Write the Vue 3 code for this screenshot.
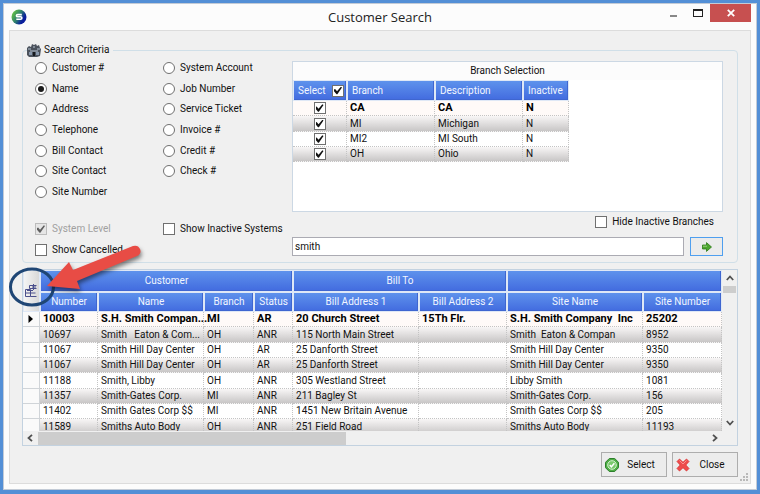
<template>
  <div class="window">
    <header class="titlebar">
      <svg class="app-icon" viewBox="0 0 16 16">
        <defs>
          <linearGradient id="ball" x1="0" y1="0" x2="1" y2="0.6">
            <stop offset="0.2" stop-color="#5cb848" />
            <stop offset="0.55" stop-color="#2c7d70" />
            <stop offset="0.85" stop-color="#0a1f9c" />
          </linearGradient>
        </defs>
        <circle cx="8" cy="8" r="7.5" fill="url(#ball)" />
        <path d="M10.8 5.6H6.8Q5.4 5.6 5.4 6.7T6.8 7.8H9.6Q10.9 7.8 10.9 9T9.6 10.2H5.3" fill="none" stroke="#fff" stroke-width="1.6" />
      </svg>
      <h1>Customer Search</h1>
      <div class="window-buttons">
        <button class="win-btn" aria-label="Minimize">
          <svg width="8" height="12" viewBox="0 0 8 12"><path d="M0 9h7" stroke="#888" stroke-width="2" /></svg>
        </button>
        <button class="win-btn" aria-label="Maximize">
          <svg width="10" height="8" viewBox="0 0 10 8"><path d="M0.5 1.5h9M0.5 0v8M9.5 0v8M0 7.5h10" fill="none" stroke="#222" stroke-width="1" /><path d="M0 1h10" stroke="#222" stroke-width="2" /></svg>
        </button>
        <button class="win-btn close" aria-label="Close window">
          <svg width="8" height="8" viewBox="0 0 8 8"><path d="M0.8 0.8l6.4 6.4M7.2 0.8L0.8 7.2" stroke="#fff" stroke-width="1.8" /></svg>
        </button>
      </div>
    </header>

    <main class="client">
      <fieldset class="criteria">
        <legend>
          <svg width="14" height="13" viewBox="0 0 14 13">
            <path d="M0 4l2-2 2 1 1-3 2 1 2-1 1 2 2-1 1 3 1 1-1 7-3 1H2L0 11z" fill="#4b525c" />
            <path d="M1 5h3M6 3h2M10 5h3M3 7h8" stroke="#b8c4d2" stroke-width="1" />
            <path d="M2 8h3v3H2zM9 8h3v3H9z" fill="#8797ab" />
            <path d="M6 8h2v4H6z" fill="#15181d" />
          </svg>
          Search Criteria
        </legend>
        <div class="options">
          <div class="radios">
            <label v-for="o in searchOptions" :key="o" class="choice">
              <input v-model="searchBy" type="radio" name="searchBy" :value="o" />
              {{ o }}
            </label>
          </div>
          <div class="checks">
            <label class="choice off"><input type="checkbox" checked disabled /> System Level</label>
            <label class="choice"><input v-model="showInactive" type="checkbox" /> Show Inactive Systems</label>
            <label class="choice"><input v-model="showCancelled" type="checkbox" /> Show Cancelled</label>
          </div>
        </div>

        <div class="right">
          <div class="branches">
            <h2>Branch Selection</h2>
            <table class="grid branch-grid">
              <colgroup>
                <col class="b-select" /><col class="b-name" /><col class="b-name" /><col class="b-inactive" />
              </colgroup>
              <thead>
                <tr>
                  <th>
                    <label class="select-all">Select <input type="checkbox" :checked="allSelected" @change="toggleAll" /></label>
                  </th>
                  <th>Branch</th>
                  <th>Description</th>
                  <th>Inactive</th>
                </tr>
              </thead>
              <tbody>
                <tr v-for="(b, i) in branches" :key="b.code" :class="{ current: i === 0 }">
                  <td class="center"><input v-model="b.selected" type="checkbox" :aria-label="b.code" /></td>
                  <td>{{ b.code }}</td>
                  <td>{{ b.description }}</td>
                  <td>{{ b.inactive }}</td>
                </tr>
              </tbody>
            </table>
          </div>
          <label class="choice hide-inactive"><input v-model="hideInactive" type="checkbox" /> Hide Inactive Branches</label>
          <div class="search-row">
            <input v-model="query" type="text" class="query" aria-label="Search text" />
            <button class="go" aria-label="Search">
              <svg width="10" height="10" viewBox="0 0 10 10">
                <path d="M0.5 3h4V0.6L9.5 5 4.5 9.4V7h-4z" fill="#4da62f" stroke="#2c7a17" stroke-width="0.8" />
                <path d="M1 4.2h4" stroke="#9fd684" stroke-width="0.9" />
              </svg>
            </button>
          </div>
        </div>
      </fieldset>

      <section class="results">
        <div class="viewport">
          <table class="grid result-grid">
            <colgroup>
              <col class="c-mark" /><col class="c-number" /><col class="c-name" /><col class="c-branch" /><col class="c-status" />
              <col class="c-addr1" /><col class="c-addr2" /><col class="c-site" /><col />
            </colgroup>
            <thead>
              <tr class="bands">
                <th rowspan="2" class="chooser">
                  <button aria-label="Choose columns">
                    <svg width="12" height="14" viewBox="0 0 12 14">
                      <path d="M4.5 4.5v-3h7M4.5 4.5h7M2 6.5h6M0.5 5.5h5v7h-5zM0.5 9h5M5.5 9h5M5.5 12.5h6M8.5 0v6M7 3h4" fill="none" stroke="#4a4f8c" stroke-width="1" />
                    </svg>
                  </button>
                </th>
                <th colspan="4">Customer</th>
                <th colspan="2">Bill To</th>
                <th colspan="2"></th>
              </tr>
              <tr>
                <th v-for="c in columns" :key="c">{{ c }}</th>
              </tr>
            </thead>
            <tbody>
              <tr v-for="(row, i) in customers" :key="i" :class="{ current: i === 0 }">
                <th class="mark">
                  <svg v-if="i === 0" width="5" height="8" viewBox="0 0 5 8"><path d="M0.5 0L5 4 0.5 8z" fill="#000" /></svg>
                </th>
                <td v-for="(cell, j) in row" :key="j">{{ cell }}</td>
              </tr>
            </tbody>
          </table>
        </div>
        <div class="vbar">
          <svg width="8" height="6" viewBox="0 0 8 6"><path d="M0.8 5L4 1.5 7.2 5" fill="none" stroke="#505050" stroke-width="1.8" /></svg>
          <div class="vthumb"></div>
          <svg class="down" width="8" height="6" viewBox="0 0 8 6"><path d="M0.8 1L4 4.5 7.2 1" fill="none" stroke="#505050" stroke-width="1.8" /></svg>
        </div>
        <div class="hbar">
          <svg width="6" height="8" viewBox="0 0 6 8"><path d="M5 0.8L1.5 4 5 7.2" fill="none" stroke="#505050" stroke-width="1.8" /></svg>
          <div class="htrack"><div class="hthumb"></div></div>
          <svg width="6" height="8" viewBox="0 0 6 8"><path d="M1 0.8L4.5 4 1 7.2" fill="none" stroke="#505050" stroke-width="1.8" /></svg>
        </div>

        <svg class="callout" width="150" height="76" viewBox="0 0 150 76">
          <ellipse cx="33" cy="47" rx="21.5" ry="18" fill="none" stroke="#1f4675" stroke-width="3" />
          <path class="arrow" d="M48 46L70 22l4 8L134 6q5-1.5 7 3t-3 7L78 41l3 8z" fill="#e84c45" />
        </svg>
      </section>

      <footer class="actions">
        <button class="action">
          <svg width="14" height="14" viewBox="0 0 14 14">
            <path d="M4.3 0.5h5.4l3.8 3.8v5.4l-3.8 3.8H4.3L0.5 9.7V4.3z" fill="#4fae45" stroke="#2d7f2c" />
            <circle cx="7" cy="7" r="4.3" fill="#79c96c" stroke="#d6f0d0" />
            <path d="M4.8 7l1.6 1.8L9.4 5.3" fill="none" stroke="#fff" stroke-width="1.5" />
          </svg>
          <span>Select</span>
        </button>
        <button class="action">
          <svg width="14" height="14" viewBox="0 0 14 14">
            <path d="M3.5 1L7 4.3 10.5 1 13 3.5 9.8 7 13 10.5 10.5 13 7 9.7 3.5 13 1 10.5 4.2 7 1 3.5z" fill="#ee4c4c" stroke="#d93030" stroke-width="0.8" />
            <path d="M3.5 2.5L7 6l3.5-3.5" fill="none" stroke="#f98f8f" />
          </svg>
          <span>Close</span>
        </button>
      </footer>
      <svg class="grip" width="8" height="8" viewBox="0 0 8 8">
        <path d="M6 0h2v2H6zM3 3h2v2H3zM6 3h2v2H6zM0 6h2v2H0zM3 6h2v2H3zM6 6h2v2H6z" fill="#b9b9b9" />
      </svg>
    </main>
  </div>
</template>

<script setup>
import { computed, ref } from 'vue';

const searchOptions = [
  'Customer #', 'Name', 'Address', 'Telephone', 'Bill Contact', 'Site Contact', 'Site Number',
  'System Account', 'Job Number', 'Service Ticket', 'Invoice #', 'Credit #', 'Check #'
];
const searchBy = ref('Name');
const showInactive = ref(false);
const showCancelled = ref(false);
const hideInactive = ref(false);
const query = ref('smith');

const branches = ref([
  { code: 'CA', description: 'CA', inactive: 'N', selected: true },
  { code: 'MI', description: 'Michigan', inactive: 'N', selected: true },
  { code: 'MI2', description: 'MI South', inactive: 'N', selected: true },
  { code: 'OH', description: 'Ohio', inactive: 'N', selected: true }
]);
const allSelected = computed(() => branches.value.every((b) => b.selected));

function toggleAll(e) {
  branches.value.forEach((b) => { b.selected = e.target.checked; });
}

const columns = ['Number', 'Name', 'Branch', 'Status', 'Bill Address 1', 'Bill Address 2', 'Site Name', 'Site Number'];
const customers = [
  ['10003', 'S.H. Smith Compan...', 'MI', 'AR', '20 Church Street', '15Th Flr.', 'S.H. Smith Company  Inc', '25202'],
  ['10697', 'Smith   Eaton & Com...', 'OH', 'ANR', '115 North Main Street', '', 'Smith  Eaton & Compan', '8952'],
  ['11067', 'Smith Hill Day Center', 'OH', 'AR', '25 Danforth Street', '', 'Smith Hill Day Center', '9350'],
  ['11067', 'Smith Hill Day Center', 'OH', 'AR', '25 Danforth Street', '', 'Smith Hill Day Center', '9350'],
  ['11188', 'Smith, Libby', 'OH', 'ANR', '305 Westland Street', '', 'Libby Smith', '1081'],
  ['11357', 'Smith-Gates Corp.', 'MI', 'ANR', '211 Bagley St', '', 'Smith-Gates Corp.', '156'],
  ['11402', 'Smith Gates Corp $$', 'MI', 'ANR', '1451 New Britain Avenue', '', 'Smith Gates Corp $$', '205'],
  ['11589', 'Smiths Auto Body', 'OH', 'ANR', '251 Field Road', '', 'Smiths Auto Body', '11193']
];
</script>

<style>
body {
  margin: 0;
  background: #538fd6;
}
</style>

<style scoped>
* {
  box-sizing: border-box;
}

.window {
  display: flex;
  flex-direction: column;
  min-height: calc(100vh - 7px);
  margin: 3px 3px 4px;
  padding: 0 5px 5px;
  border: 1px solid #c3cbd6;
  background: #fcfcfc;
  color: #111;
  font: 10px/14px Roboto, "Liberation Sans", sans-serif;
}

button,
input {
  margin: 0;
  font: inherit;
  color: inherit;
}

.titlebar {
  display: grid;
  grid-template-columns: 1fr auto 1fr;
  align-items: center;
  height: 26px;
}

.app-icon {
  width: 16px;
  height: 16px;
  margin-left: 2px;
}

h1 {
  margin: 0;
  font: 13px/20px "Open Sans", sans-serif;
  color: #222;
}

.window-buttons {
  display: flex;
  justify-content: flex-end;
  align-self: start;
}

.win-btn {
  display: flex;
  align-items: center;
  justify-content: center;
  width: 24px;
  height: 18px;
  padding: 0;
  border: 0;
  background: none;
}

.win-btn.close {
  width: 41px;
  background: #c75050;
}

.client {
  position: relative;
  flex: 1;
  padding: 12px 12px 6px;
  border: 1px solid #dcdcdc;
  background: #f0f0f0;
}

.criteria {
  display: grid;
  grid-template-columns: 257px 1fr;
  min-width: 0;
  margin: 0;
  padding: 0 14px 5px 12px;
  border: 1px solid #d0dfe8;
  border-radius: 4px;
}

legend {
  display: flex;
  align-items: center;
  gap: 3px;
  margin-left: -8px;
  padding: 0 4px 0 0;
}

.options {
  padding-top: 1px;
}

.radios {
  display: grid;
  grid-template-rows: repeat(7, 1fr);
  grid-auto-flow: column;
  grid-template-columns: 128px 1fr;
  height: 144px;
}

.checks {
  display: grid;
  grid-template-columns: 128px 1fr;
  gap: 7px 0;
  margin-top: 20px;
}

.choice {
  display: flex;
  align-items: center;
  gap: 5px;
  white-space: nowrap;
}

.off {
  color: #a0a0a0;
}

input[type="checkbox"],
input[type="radio"] {
  appearance: none;
  display: grid;
  place-items: center;
  flex: none;
  width: 12px;
  height: 12px;
  border: 1px solid #707070;
  background: #fff;
}

input[type="radio"] {
  border-radius: 50%;
}

input[type="radio"]:checked::before {
  content: "";
  width: 6px;
  height: 6px;
  border-radius: 50%;
  background: #1a1a1a;
}

input[type="checkbox"]:checked::before {
  content: "";
  width: 8px;
  height: 8px;
  background: #111;
  clip-path: polygon(0 38%, 14% 32%, 38% 60%, 86% 2%, 100% 14%, 42% 96%, 32% 96%, 0 58%);
}

input[type="checkbox"]:disabled {
  border-color: #bcbcbc;
  background: #e6e6e6;
}

input[type="checkbox"]:disabled::before {
  background: #606060;
}

.right {
  display: flex;
  flex-direction: column;
  min-width: 0;
}

.branches {
  height: 151px;
  margin-top: 4px;
  border: 1px solid #ccd8e4;
  background: #fff;
}

h2 {
  margin: 0;
  font: inherit;
  line-height: 18px;
  text-align: center;
  background: #fcfcfc;
}

.grid {
  table-layout: fixed;
  border-spacing: 0;
}

.grid th {
  height: 20px;
  padding: 0;
  overflow: hidden;
  border: 1px solid #dfe8f6;
  background: linear-gradient(#5e92ec, #426bdf) padding-box;
  box-shadow: inset -1px -1px 0 #3f66d0;
  color: #f2f6ff;
  font-weight: normal;
  white-space: nowrap;
}

.grid td {
  height: 15px;
  padding: 0 0 0 3px;
  overflow: hidden;
  border: dotted #c4c4c4;
  border-width: 0 1px 1px 0;
  background: #fff;
  line-height: 14px;
  white-space: pre;
}

.grid tbody tr:nth-child(3n + 2) td {
  height: 16px;
}

.grid tbody tr:nth-child(even) td {
  background: linear-gradient(#f8f6f6, #c8c6c6);
}

.grid .current td {
  overflow: visible;
  background: #fffaf8;
  color: #000;
  font-size: 11px;
  font-weight: bold;
}

.branch-grid {
  width: 276px;
}

.branch-grid th {
  height: 21px;
  padding-left: 4px;
  text-align: left;
}

.branch-grid .center {
  padding: 0;
}

.branch-grid .center input {
  margin: 0 auto;
}

.b-select { width: 54px; }
.b-name { width: 88px; }
.b-inactive { width: 46px; }

.select-all {
  display: flex;
  align-items: center;
  justify-content: space-between;
  padding-right: 2px;
}

.hide-inactive {
  align-self: flex-end;
  margin: 3px 9px 8px 0;
}

.search-row {
  display: flex;
  gap: 6px;
}

.query {
  flex: 1;
  min-width: 0;
  height: 19px;
  padding: 0 2px;
  border: 1px solid #ababb3;
  background: #fff;
}

.go {
  display: flex;
  align-items: center;
  justify-content: center;
  width: 33px;
  height: 19px;
  padding: 0;
  border: 1px solid #4f9fef;
  background: #ebebeb;
}

.results {
  position: relative;
  display: grid;
  grid-template-columns: 1fr 15px;
  grid-template-rows: 161px 14px;
  margin-top: 6px;
  border: 1px solid #c3d2e0;
  background: #f0f0f0;
}

.viewport {
  overflow: hidden;
}

.result-grid {
  width: 100%;
  min-width: 699px;
}

.bands th {
  height: 22px;
}

.c-mark { width: 17px; }
.c-number { width: 58px; }
.c-name { width: 106px; }
.c-branch { width: 50px; }
.c-status { width: 39px; }
.c-addr1 { width: 126px; }
.c-addr2 { width: 88px; }
.c-site { width: 136px; }

.grid .chooser {
  background: linear-gradient(90deg, #f4f4f4, #d8d8d8);
  box-shadow: none;
}

.chooser button {
  display: flex;
  padding: 0 0 0 1px;
  border: 0;
  background: none;
}

.grid .mark {
  height: 15px;
  padding: 0 0 0 5px;
  border-width: 0 1px 1px 0;
  border-color: #d0d4d8;
  background: #fafafa;
  box-shadow: none;
  line-height: 8px;
  text-align: left;
}

.vbar {
  display: flex;
  flex-direction: column;
  align-items: center;
  padding: 5px 0;
}

.vthumb {
  width: 13px;
  height: 7px;
  margin-top: 5px;
  background: #cdcdcd;
}

.down {
  margin-top: auto;
}

.hbar {
  display: flex;
  align-items: center;
  grid-column: 1 / 3;
  gap: 5px;
  padding: 0 19px 0 4px;
}

.htrack {
  flex: 1;
}

.hthumb {
  width: 46%;
  height: 13px;
  background: #cdcdcd;
}

.callout {
  position: absolute;
  top: -30px;
  left: -24px;
  pointer-events: none;
}

.arrow {
  filter: drop-shadow(1px 3px 2px rgba(0, 0, 0, 0.5));
}

.actions {
  display: flex;
  justify-content: flex-end;
  gap: 5px;
  margin-top: 6px;
}

.action {
  display: flex;
  align-items: center;
  width: 66px;
  height: 25px;
  padding: 0 3px;
  border: 1px solid #adadad;
  background: #ececec;
}

.action span {
  flex: 1;
  text-align: center;
}

.grip {
  position: absolute;
  right: 2px;
  bottom: 2px;
}
</style>
